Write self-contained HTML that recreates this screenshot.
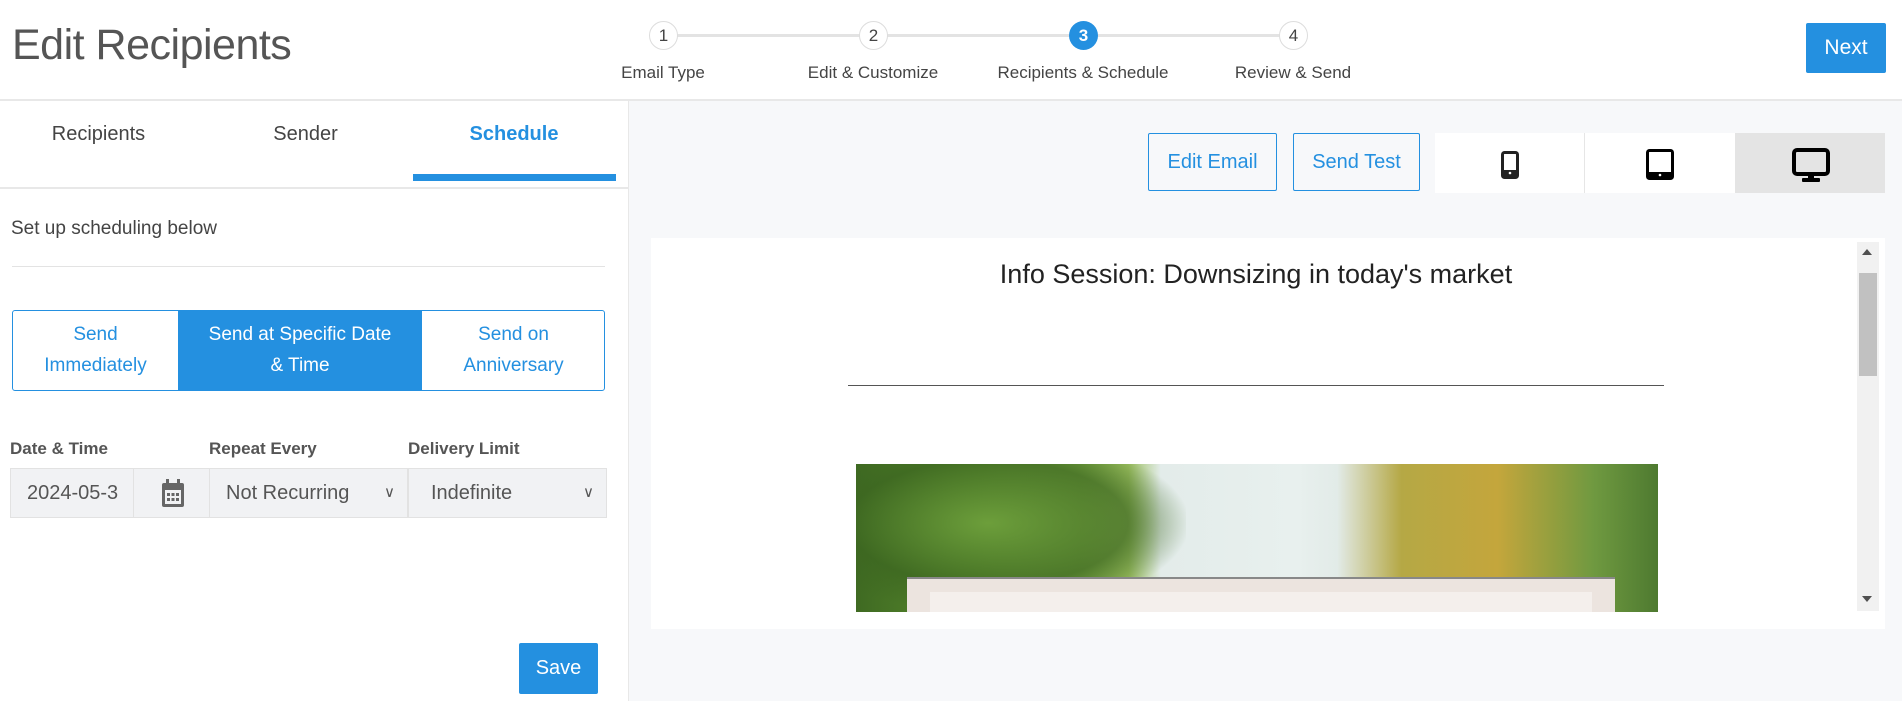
<!DOCTYPE html>
<html><head><meta charset="utf-8"><style>
*{box-sizing:border-box;margin:0;padding:0}
body{width:1902px;height:701px;overflow:hidden;background:#fff;font-family:"Liberation Sans",sans-serif;position:relative;color:#333}
.a{position:absolute}
.c{text-align:center}
</style></head><body>
<div class="a" style="left:12px;top:21px;font-size:43px;color:#555;letter-spacing:-0.5px">Edit Recipients</div>
<!-- stepper -->
<div class="a" style="left:663px;top:34px;width:630px;height:3px;background:#e3e3e3"></div>
<div class="a c" style="left:649px;top:21px;width:29px;height:29px;border-radius:50%;border:1px solid #ddd;background:#fff;font-size:17px;line-height:27px;color:#444">1</div>
<div class="a c" style="left:859px;top:21px;width:29px;height:29px;border-radius:50%;border:1px solid #ddd;background:#fff;font-size:17px;line-height:27px;color:#444">2</div>
<div class="a c" style="left:1069px;top:21px;width:29px;height:29px;border-radius:50%;background:#2490e0;font-size:17px;line-height:29px;color:#fff;font-weight:bold">3</div>
<div class="a c" style="left:1279px;top:21px;width:29px;height:29px;border-radius:50%;border:1px solid #ddd;background:#fff;font-size:17px;line-height:27px;color:#444">4</div>
<div class="a c" style="left:563px;top:63px;width:200px;font-size:17px;color:#444">Email Type</div>
<div class="a c" style="left:773px;top:63px;width:200px;font-size:17px;color:#444">Edit &amp; Customize</div>
<div class="a c" style="left:963px;top:63px;width:240px;font-size:17px;color:#444">Recipients &amp; Schedule</div>
<div class="a c" style="left:1193px;top:63px;width:200px;font-size:17px;color:#444">Review &amp; Send</div>
<div class="a c" style="left:1806px;top:23px;width:80px;height:50px;background:#2490e0;border-radius:2px;color:#fff;font-size:21px;line-height:50px">Next</div>
<div class="a" style="left:0;top:99px;width:1902px;height:2px;background:#e8e8e8"></div>
<!-- right bg -->
<div class="a" style="left:628px;top:101px;width:1274px;height:600px;background:#f7f8fa;border-left:1px solid #e8e8e8"></div>
<!-- tabs -->
<div class="a c" style="left:0;top:123px;width:197px;font-size:20px;color:#444">Recipients</div>
<div class="a c" style="left:207px;top:123px;width:197px;font-size:20px;color:#444">Sender</div>
<div class="a c" style="left:412px;top:123px;width:204px;font-size:20px;color:#2490e0;font-weight:bold">Schedule</div>
<div class="a" style="left:413px;top:174px;width:203px;height:7px;background:#2490e0"></div>
<div class="a" style="left:0;top:187px;width:628px;height:2px;background:#e8e8e8"></div>
<div class="a" style="left:11px;top:218px;font-size:19px;color:#444">Set up scheduling below</div>
<div class="a" style="left:12px;top:266px;width:593px;height:1px;background:#e3e3e3"></div>
<!-- segmented -->
<div class="a" style="left:12px;top:310px;width:593px;height:81px;border:1px solid #2490e0;border-radius:3px;overflow:hidden">
 <div class="a c" style="left:0;top:0;width:165px;height:79px;color:#2490e0;font-size:19px;line-height:31px;padding-top:8px">Send<br>Immediately</div>
 <div class="a c" style="left:165px;top:0;width:244px;height:79px;background:#2490e0;color:#fff;font-size:19px;line-height:31px;padding-top:8px">Send at Specific Date<br>&amp; Time</div>
 <div class="a c" style="left:409px;top:0;width:183px;height:79px;color:#2490e0;font-size:19px;line-height:31px;padding-top:8px">Send on<br>Anniversary</div>
</div>
<div class="a" style="left:10px;top:439px;font-size:17px;font-weight:bold;color:#555">Date &amp; Time</div>
<div class="a" style="left:209px;top:439px;font-size:17px;font-weight:bold;color:#555">Repeat Every</div>
<div class="a" style="left:408px;top:439px;font-size:17px;font-weight:bold;color:#555">Delivery Limit</div>
<div class="a" style="left:10px;top:468px;width:124px;height:50px;background:#f1f2f4;border:1px solid #e2e2e2;font-size:20px;line-height:48px;padding-left:16px;color:#555;overflow:hidden;white-space:nowrap">2024-05-3</div>
<div class="a" style="left:133px;top:468px;width:77px;height:50px;background:#f1f2f4;border:1px solid #e2e2e2">
<svg class="a" style="left:27px;top:10px" width="24" height="29" viewBox="0 0 24 29"><rect x="1" y="4" width="22" height="24" rx="2" fill="#666"/><rect x="4" y="11" width="16" height="14" fill="#f1f2f4"/><rect x="5" y="0" width="3" height="7" fill="#666"/><rect x="16" y="0" width="3" height="7" fill="#666"/><g fill="#666"><rect x="6" y="14" width="3" height="3"/><rect x="10.5" y="14" width="3" height="3"/><rect x="15" y="14" width="3" height="3"/><rect x="6" y="19" width="3" height="3"/><rect x="10.5" y="19" width="3" height="3"/><rect x="15" y="19" width="3" height="3"/></g></svg></div>
<div class="a" style="left:209px;top:468px;width:199px;height:50px;background:#f1f2f4;border:1px solid #e2e2e2;font-size:20px;line-height:48px;padding-left:16px;color:#555">Not Recurring<span class="a" style="right:12px;top:0;font-size:15px">&#8744;</span></div>
<div class="a" style="left:408px;top:468px;width:199px;height:50px;background:#f1f2f4;border:1px solid #e2e2e2;font-size:20px;line-height:48px;padding-left:22px;color:#555">Indefinite<span class="a" style="right:12px;top:0;font-size:15px">&#8744;</span></div>
<div class="a c" style="left:519px;top:643px;width:79px;height:51px;background:#2490e0;border-radius:2px;color:#fff;font-size:20px;line-height:51px">Save</div>
<!-- right buttons -->
<div class="a c" style="left:1148px;top:133px;width:129px;height:58px;border:1px solid #2490e0;border-radius:2px;color:#2490e0;font-size:20px;line-height:56px">Edit Email</div>
<div class="a c" style="left:1293px;top:133px;width:127px;height:58px;border:1px solid #2490e0;border-radius:2px;color:#2490e0;font-size:20px;line-height:56px">Send Test</div>
<div class="a" style="left:1435px;top:133px;width:450px;height:60px;background:#fff"></div>
<div class="a" style="left:1584px;top:133px;width:1px;height:60px;background:#e6e6e6"></div>
<div class="a" style="left:1735px;top:133px;width:150px;height:60px;background:#e4e4e4"></div>
<svg class="a" style="left:1501px;top:151px" width="18" height="28" viewBox="0 0 18 28"><rect x="1.5" y="1.5" width="15" height="25" rx="2" fill="none" stroke="#222" stroke-width="3"/><rect x="3" y="19" width="12" height="6" fill="#222"/><circle cx="9" cy="22" r="1.3" fill="#fff"/></svg>
<svg class="a" style="left:1646px;top:149px" width="28" height="31" viewBox="0 0 28 31"><rect x="1.5" y="1.5" width="25" height="28" rx="2" fill="none" stroke="#000" stroke-width="3"/><rect x="2" y="23" width="24" height="6" fill="#000"/><circle cx="14" cy="26" r="1.3" fill="#fff"/></svg>
<svg class="a" style="left:1792px;top:148px" width="38" height="34" viewBox="0 0 38 34"><rect x="2" y="2" width="34" height="24" rx="3" fill="none" stroke="#000" stroke-width="4"/><rect x="16" y="26" width="6" height="5" fill="#000"/><rect x="10" y="30" width="18" height="4" rx="1" fill="#000"/></svg>
<!-- email preview -->
<div class="a" style="left:651px;top:238px;width:1234px;height:391px;background:#fff"></div>
<div class="a c" style="left:651px;top:259px;width:1210px;font-size:27px;color:#222;font-family:'Liberation Sans',Arial,sans-serif">Info Session: Downsizing in today's market</div>
<div class="a" style="left:848px;top:385px;width:816px;height:1px;background:#555"></div>
<div class="a" style="left:1857px;top:242px;width:22px;height:369px;background:#f1f1f1"></div>
<div class="a" style="left:1859px;top:273px;width:18px;height:103px;background:#c1c1c1"></div>
<div class="a" style="left:1862px;top:249px;width:0;height:0;border-left:5px solid transparent;border-right:5px solid transparent;border-bottom:6px solid #505050"></div>
<div class="a" style="left:1862px;top:596px;width:0;height:0;border-left:5px solid transparent;border-right:5px solid transparent;border-top:6px solid #505050"></div>
<div class="a" style="left:856px;top:464px;width:802px;height:148px;overflow:hidden;background:linear-gradient(90deg,#3f6a22 0%,#5a8c2e 15%,#7aa844 28%,#9cc060 34%,#e3ecea 38%,#e8f0ee 55%,#e2ebe8 60%,#b5a845 68%,#c4a63c 80%,#6f9940 92%,#4e7a30 100%)">
 <div class="a" style="left:0;top:0;width:330px;height:148px;background:radial-gradient(ellipse at 40% 40%,rgba(110,160,60,.9),rgba(60,102,32,.7) 50%,rgba(60,102,32,0) 72%)"></div>
 <div class="a" style="left:51px;top:113px;width:708px;height:35px;background:#ece4df;border-top:2px solid #888"></div>
 <div class="a" style="left:74px;top:128px;width:662px;height:20px;background:#f4efec"></div>
</div>
</body></html>
